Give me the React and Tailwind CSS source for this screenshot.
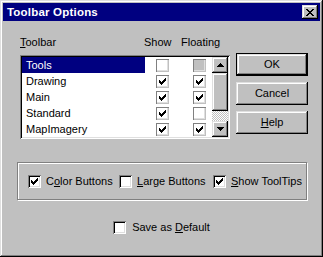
import React from 'react';

const raised = 'shadow-[inset_-1px_-1px_#000,inset_1px_1px_#dfdfdf,inset_-2px_-2px_#808080,inset_2px_2px_#fff]';

function Tick() {
    // win95 style 7x7 check mark
    const px = [
        [6, 0], [5, 1], [6, 1], [0, 2], [4, 2], [5, 2], [6, 2],
        [0, 3], [1, 3], [3, 3], [4, 3], [5, 3],
        [0, 4], [1, 4], [2, 4], [3, 4], [4, 4],
        [1, 5], [2, 5], [3, 5], [2, 6],
    ];
    return (
        <svg width="7" height="7" viewBox="0 0 7 7" shapeRendering="crispEdges">
            {px.map(([x, y]) => <rect key={`${x}-${y}`} x={x} y={y} width="1" height="1" fill="#000" />)}
        </svg>
    );
}

function ListBox({ checked, grayed }) {
    return (
        <div className={`w-[13px] h-[13px] flex items-center justify-center shadow-[inset_1px_1px_#808080,inset_-1px_-1px_#c0c0c0,inset_-2px_-2px_#dfdfdf] ${grayed ? 'bg-[#c0c0c0]' : 'bg-white'}`}>
            {checked && <Tick />}
        </div>
    );
}

function PanelBox({ checked }) {
    return (
        <div className="w-[13px] h-[13px] shrink-0 bg-white flex items-center justify-center shadow-[inset_1px_1px_#808080,inset_-1px_-1px_#fff,inset_2px_2px_#000,inset_-2px_-2px_#dfdfdf]">
            {checked && <Tick />}
        </div>
    );
}

function Arrow({ down }) {
    return (
        <svg width="7" height="4" viewBox="0 0 7 4" shapeRendering="crispEdges">
            {down
                ? <polygon points="0,0 7,0 3.5,4" fill="#000" />
                : <polygon points="3.5,0 7,4 0,4" fill="#000" />}
        </svg>
    );
}

function PushButton({ children, isDefault }) {
    const face = (
        <div className={`flex-1 bg-[#c0c0c0] flex items-center justify-center ${raised}`}>
            {children}
        </div>
    );
    if (isDefault) {
        return <div className="w-[72px] h-[23px] border border-black flex">{face}</div>;
    }
    return <div className="w-[72px] h-[23px] flex">{face}</div>;
}

export default function App() {
    const rows = [
        { name: 'Tools', show: false, floating: false, grayed: true, selected: true },
        { name: 'Drawing', show: true, floating: true },
        { name: 'Main', show: true, floating: true },
        { name: 'Standard', show: true, floating: false },
        { name: 'MapImagery', show: true, floating: true },
    ];

    return (
        <div className="w-[323px] h-[257px] bg-[#c0c0c0] p-[3px] flex flex-col text-[11px] leading-[13px] text-black font-['Liberation_Sans',Arial,sans-serif] shadow-[inset_-1px_-1px_#000,inset_1px_1px_#dfdfdf,inset_-2px_-2px_#808080,inset_2px_2px_#fff]">
            {/* Title bar */}
            <div className="h-[18px] bg-[#000080] flex items-center justify-between pl-[4px] pr-[2px]">
                <span className="text-white font-bold text-[11.5px] tracking-[0.2px]">Toolbar Options</span>
                <div className={`w-[16px] h-[14px] bg-[#c0c0c0] flex items-center justify-center ${raised}`}>
                    <svg width="8" height="7" viewBox="0 0 8 7" shapeRendering="crispEdges">
                        <path d="M0 0h2v1h1v1h2v-1h1v-1h2v1h-1v1h-1v1h-1v1h1v1h1v1h1v1h-2v-1h-1v-1h-2v1h-1v1h-2v-1h1v-1h1v-1h1v-1h-1v-1h-1v-1h-1z" fill="#000" />
                    </svg>
                </div>
            </div>

            <div className="flex mt-[15px] ml-[17px]">
                <div className="w-[210px] flex flex-col">
                    <div className="h-[13px] flex">
                        <span className="w-[124px]"><span className="underline">T</span>oolbar</span>
                        <span className="w-[37px]">Show</span>
                        <span>Floating</span>
                    </div>
                    <div className="mt-[6px] h-[84px] bg-white p-[2px] flex shadow-[inset_1px_1px_#808080,inset_-1px_-1px_#fff,inset_2px_2px_#000,inset_-2px_-2px_#dfdfdf]">
                        <div className="w-[190px] flex flex-col">
                            {rows.map(r => (
                                <div key={r.name} className="h-[16px] flex items-center">
                                    <div className={`w-[123px] h-full pl-[4px] flex items-center ${r.selected ? 'bg-[#000080] text-white' : ''}`}>
                                        {r.name}
                                    </div>
                                    <div className="ml-[11px]"><ListBox checked={r.show} /></div>
                                    <div className="ml-[24px]"><ListBox checked={r.floating} grayed={r.grayed} /></div>
                                </div>
                            ))}
                        </div>
                        <div className="w-[16px] flex flex-col">
                            <div className={`h-[16px] bg-[#c0c0c0] flex items-center justify-center ${raised}`}><Arrow /></div>
                            <div className={`h-[38px] bg-[#c0c0c0] ${raised}`} />
                            <div className="h-[10px] bg-[repeating-conic-gradient(#c0c0c0_0%_25%,#fff_0%_50%)] bg-size-[2px_2px]" />
                            <div className={`h-[16px] bg-[#c0c0c0] flex items-center justify-center ${raised}`}><Arrow down /></div>
                        </div>
                    </div>
                </div>

                <div className="ml-[6px] mt-[17px] flex flex-col gap-[6px]">
                    <PushButton isDefault>OK</PushButton>
                    <PushButton>Cancel</PushButton>
                    <PushButton><span><span className="underline">H</span>elp</span></PushButton>
                </div>
            </div>

            {/* Options group */}
            <div className="mt-[23px] ml-[14px] w-[290px] h-[38px] border border-[#808080] shadow-[inset_1px_1px_#fff,1px_1px_#fff] flex items-center pl-[10px]">
                <div className="w-[91px] flex items-center">
                    <PanelBox checked />
                    <span className="ml-[5px]">C<span className="underline">o</span>lor Buttons</span>
                </div>
                <div className="w-[94px] flex items-center">
                    <PanelBox />
                    <span className="ml-[5px]"><span className="underline">L</span>arge Buttons</span>
                </div>
                <div className="flex items-center">
                    <PanelBox checked />
                    <span className="ml-[5px]"><span className="underline">S</span>how ToolTips</span>
                </div>
            </div>

            <div className="mt-[21px] flex justify-center items-center">
                <PanelBox />
                <span className="ml-[6px]">Save as <span className="underline">D</span>efault</span>
            </div>
        </div>
    );
}
